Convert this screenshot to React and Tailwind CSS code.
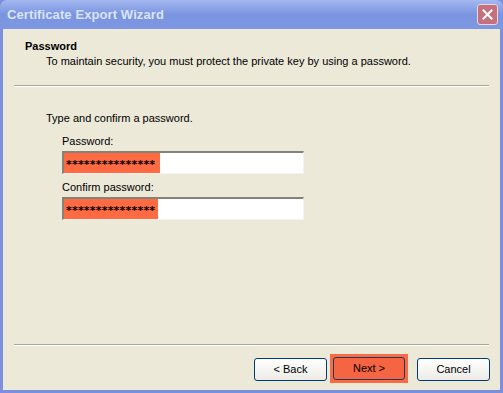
import React from "react";

function Field({ label, fill }) {
  return (
    <div className="flex flex-col">
      <div className="h-[14px] leading-[14px]">{label}</div>
      <div className="mt-[3px] w-[242px] h-[23px] border-t-2 border-l-2 border-t-[#858378] border-l-[#858378] border-r border-b border-r-[#f4f3ee] border-b-[#f4f3ee] bg-white flex">
        <div className="h-full bg-[#fe6a41] flex items-center pl-[2px]" style={{ width: fill }}>
          <span
            className="text-[11px] font-bold text-black leading-none mt-[3px] tracking-[0.2px]"
            style={{ fontFamily: '"DejaVu Sans", sans-serif' }}
          >
            ***************
          </span>
        </div>
      </div>
    </div>
  );
}

function Btn({ children }) {
  return (
    <div className="w-[73px] h-[23px] rounded-[3px] border border-[#003c74] bg-gradient-to-b from-white to-[#ecebe6] flex items-center justify-center text-black">
      {children}
    </div>
  );
}

export default function App() {
  return (
    <div
      className="w-[503px] h-[393px] flex flex-col bg-[#7b8fe0] text-[11px] text-black overflow-hidden"
      style={{ fontFamily: '"Liberation Sans", Arial, sans-serif' }}
    >
      <div className="h-[29px] shrink-0 rounded-t-[7px] bg-gradient-to-b from-[#a4b8f0] via-[#7a94e0] to-[#7d97e2] flex items-center justify-between pl-[7px] pr-[5px]">
        <span className="text-[13px] font-bold text-[#dbe5f9] tracking-[0.1px]">
          Certificate Export Wizard
        </span>
        <div className="w-[21px] h-[21px] rounded-[3px] border border-[#e8d8e0] bg-[#c5707d] flex items-center justify-center">
          <svg width="11" height="11" viewBox="0 0 11 11">
            <path d="M1.5 1.5 L9.5 9.5 M9.5 1.5 L1.5 9.5" stroke="white" strokeWidth="2" strokeLinecap="square" />
          </svg>
        </div>
      </div>
      <div className="flex-1 mx-[3px] mb-[3px] bg-[#ece9d8] flex flex-col">
        <div className="h-[56px] shrink-0 pt-[11px] pl-[22px]">
          <div className="font-bold leading-[13px]">Password</div>
          <div className="pl-[21px] mt-[2px] leading-[13px]">To maintain security, you must protect the private key by using a password.</div>
        </div>
        <div className="mx-[11px] h-[2px] border-t border-t-[#aca899] border-b border-b-white" />
        <div className="flex-1 pt-[24px] pl-[43px]">
          <div className="leading-[14px]">Type and confirm a password.</div>
          <div className="pl-[16px] mt-[9px] flex flex-col gap-[6px]">
            <Field label="Password:" fill={96} />
            <Field label="Confirm password:" fill={94} />
          </div>
        </div>
        <div className="mx-[11px] h-[2px] border-t border-t-[#aca899] border-b border-b-white" />
        <div className="h-[44px] shrink-0 flex items-start justify-end pr-[10px] pt-[12px]">
          <Btn>&lt; Back</Btn>
          <div className="ml-[3px] -mt-[4px] p-[3px] bg-[#f96a45]">
            <div className="w-[72px] h-[23px] rounded-[3px] border border-[#1f3a5c] bg-[#f66543] flex items-center justify-center text-black">
              Next &gt;
            </div>
          </div>
          <div className="ml-[9px]">
            <Btn>Cancel</Btn>
          </div>
        </div>
      </div>
    </div>
  );
}
